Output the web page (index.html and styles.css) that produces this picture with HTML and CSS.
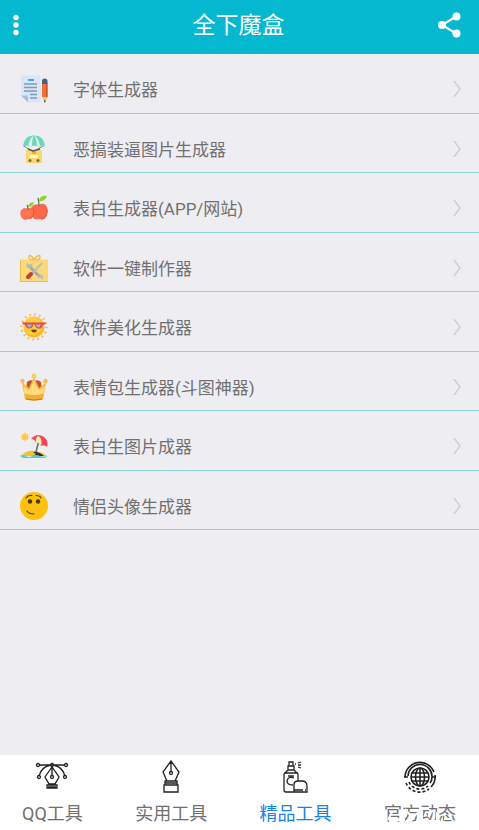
FILE: index.html
```html
<!DOCTYPE html>
<html lang="zh-CN">
<head>
  <meta charset="UTF-8" />
  <meta name="viewport" content="width=device-width, initial-scale=1" />
  <title>全下魔盒</title>
  <link rel="stylesheet" href="styles.css">
</head>
<body>

  <header class="topbar">
    <button type="button" class="icon-button" aria-label="菜单">
      <svg width="8" height="24" viewBox="0 0 8 24" fill="#fff"><circle cx="4" cy="4.500" r="2.700"/><circle cx="4" cy="12" r="2.700"/><circle cx="4" cy="19.500" r="2.700"/></svg>
    </button>
    <h1>全下魔盒</h1>
    <button type="button" class="icon-button" aria-label="分享">
      <svg width="24" height="26" viewBox="0 0 24 26" fill="#fff"><path d="M20 4 5 13l15 9" fill="none" stroke="#fff" stroke-width="2.200"/><circle cx="19.500" cy="4.500" r="4"/><circle cx="5" cy="13" r="4"/><circle cx="19.500" cy="21.500" r="4"/></svg>
    </button>
  </header>

  <main>
    <ul class="tool-list">
      <li><a href="#">
        <svg class="tool-icon" viewBox="0 0 28 28">
          <path d="M1 .5h19.500v27H8l-7-7z" fill="#d9e6f8"/><path d="M1 20.500h7v7z" fill="#a9bddb"/>
          <path d="M8 5h6" stroke="#42a5ef" stroke-width="2"/>
          <path d="M4 9h13M4 12.500h13M4 16h13M10 19.500h7M10 23h7" stroke="#8297b4" stroke-width="1.500"/>
          <path d="M22 8h5.500v14H22z" fill="#ee7138"/><path d="M26 8h1.500v14H26z" fill="#ce5427"/>
          <path d="M22 9V6q0-2.500 2.700-2.500T27.500 6v3z" fill="#49617f"/><path d="M22 22h5.500l-2.700 6z" fill="#f5c587"/><path d="m23.800 25.500 1 2.500 1-2.500z" fill="#333"/>
        </svg>
        <span>字体生成器</span>
        <svg class="chevron" viewBox="0 0 8 18"><path d="m1 1 6 8-6 8"/></svg>
      </a></li>
      <li><a href="#">
        <svg class="tool-icon" viewBox="0 0 28 28">
          <path d="m4 11 9 6 10-6" fill="none" stroke="#7b8180"/>
          <path d="M3 12Q4 .5 14 .5T25 12q-3-3-6 0-4-3-9 0-4-3-7 0z" fill="#69d6bd"/><path d="M8.500 11Q9 3 14 .5 19 3 20 11l-1 1q-4-3-9 0z" fill="#d8f4e9"/><path d="M12 11Q12 3 14 .5 16.500 3 17 11q-2.500-1-5 0z" fill="#69d6bd"/>
          <path d="M6 15h16v13H6z" fill="#fbd86f"/><path d="M12 15h4v4h-4z" fill="#e9b72b"/><path d="M10 20h8v3h-8z" fill="#fff3cd"/>
          <path d="m8 14 5 2 7-2" fill="none" stroke="#555" stroke-width="1.500"/><circle cx="10" cy="25.500" r="1.500" fill="#77683e"/><circle cx="18" cy="25.500" r="1.500" fill="#77683e"/>
        </svg>
        <span>恶搞装逼图片生成器</span>
        <svg class="chevron" viewBox="0 0 8 18"><path d="m1 1 6 8-6 8"/></svg>
      </a></li>
      <li><a href="#">
        <svg class="tool-icon" viewBox="0 0 28 28">
          <path d="M19 11c4-3 9 0 8.500 6-.5 5-4 9-6 8.500l-3-.5c-5 2-8-4-8-9 1-5 5-7 8.500-5z" fill="#fa694b"/><path d="M25 11c4 5 1 13-4 14.500 5 1 7-6 6.500-10z" fill="#e5473a"/>
          <path d="M7.500 15c4-3 7 0 6.500 4s-3 6.500-5 6l-2 .5C2 27-.5 21 .5 17.500 2 14 5 13 7.500 15z" fill="#ff7554"/><path d="M12 14c3 4 1 9-3 11 4 0 6-6 5-9z" fill="#e5473a"/>
          <path d="M19 12q0-5-1-8M8 16q0-4-1-5" fill="none" stroke="#397447" stroke-width="1.200"/><path d="M19 7q1-6 8-5-2 6-8 5zM8 13q1-5 6-5-1 5-6 5z" fill="#94ce37"/>
        </svg>
        <span>表白生成器(APP/网站)</span>
        <svg class="chevron" viewBox="0 0 8 18"><path d="m1 1 6 8-6 8"/></svg>
      </a></li>
      <li><a href="#">
        <svg class="tool-icon" viewBox="0 0 28 28">
          <path d="M0 5.500h28V28H0z" fill="#fbd979"/><path d="M0 27h28v1H0zM0 6h1v21H0z" fill="#e8be52"/>
          <path d="M14 5Q9-1 9 3t5 2zm0 0q6-6 6-2t-6 2z" fill="none" stroke="#f0c044" stroke-width="1.500"/>
          <path d="m9 12 11 11" stroke="#9eabb1" stroke-width="3"/><path d="M7 9q-2 5 2 5 5 0 3-5l-2 2zM18 25q1-5 4-4 2 2 0 5l-2-3z" fill="#b1bbc0"/>
          <path d="m22 9-11 12" stroke="#b4bec3" stroke-width="2"/><path d="m11 20-3 3" stroke="#c83c2c" stroke-width="4" stroke-linecap="round"/>
        </svg>
        <span>软件一键制作器</span>
        <svg class="chevron" viewBox="0 0 8 18"><path d="m1 1 6 8-6 8"/></svg>
      </a></li>
      <li><a href="#">
        <svg class="tool-icon" viewBox="0 0 28 28">
          <circle cx="14" cy="14" r="12.500" fill="none" stroke="#f3b43b" stroke-width="2.500" stroke-dasharray="1.300 3.609"/>
          <circle cx="14" cy="14" r="10.500" fill="#ffb927"/><circle cx="13" cy="13" r="9" fill="#ffcd37"/>
          <path d="M2 9.500h24l-1 2h-2q-1 5-5 4-3-1-3-4h-2q0 4-4 4-3 0-4-4H3z" fill="#ed4357"/><path d="M7 11.500h5q-1 3-3 3-2-1-2-3zM16 11.500h5q-1 3-3 3-2-1-2-3z" fill="#7ac6e5"/><path d="M11 17q3-1 6 0-1 3-3 2.500-2 0-3-2.500z" fill="#743c20"/>
        </svg>
        <span>软件美化生成器</span>
        <svg class="chevron" viewBox="0 0 8 18"><path d="m1 1 6 8-6 8"/></svg>
      </a></li>
      <li><a href="#">
        <svg class="tool-icon" viewBox="0 0 28 28">
          <path d="M7 9q3-3 7-1 4-2 7 1l1 8H6z" fill="#c4552f"/>
          <path d="M1.500 8q4 5 7.500 7l5-11 5 11q4-2 7.500-7L23 26q-9 3-18 0z" fill="#f6bd4b"/>
          <path d="M3.500 13q3 4 6 4l4.500-9 4.500 9q3 0 6-4l-1 8q-9.500 3-19 0z" fill="#ffdc7d"/><path d="M4.500 20.500q9.500 3 19 0l-1 6q-8 2-17 0z" fill="#f2ae37"/><path d="M6 26q8 2 16 0" fill="none" stroke="#c97721"/>
          <circle cx="14" cy="3" r="2.500" fill="#f6ce68"/><circle cx="2.500" cy="8" r="2.200" fill="#f2bd59"/><circle cx="25.500" cy="8" r="2.200" fill="#f2bd59"/>
        </svg>
        <span>表情包生成器(斗图神器)</span>
        <svg class="chevron" viewBox="0 0 8 18"><path d="m1 1 6 8-6 8"/></svg>
      </a></li>
      <li><a href="#">
        <svg class="tool-icon" viewBox="0 0 28 28">
          <path d="M5 .5v9M.5 5h9M2 2l6 6M8 2 2 8" stroke="#f7c352"/><circle cx="5" cy="5" r="3" fill="#ffc843"/>
          <path d="M1 24q5-6 14-5 7 1 12 5z" fill="#f4c12f"/><path d="M13 20q5-1 11 4H13l3-2z" fill="#273238"/>
          <path d="m19 8-3 12" stroke="#58707b" stroke-width="1.500"/>
          <path d="M11 7Q17 0 24 5q5 4 3 10-3-3-6-1-2-4-5-3-1-4-5-4z" fill="#ed4860"/><path d="M18 3.500q5 4 3 10.500-2-4-5-3-1-4 2-7.500z" fill="#f8e9ae"/>
          <path d="M0 24q3-2 6 0 3 2 6 0 4-2 8 0 4 1 8 0l-3 2H3z" fill="#65c8c3"/>
        </svg>
        <span>表白生图片成器</span>
        <svg class="chevron" viewBox="0 0 8 18"><path d="m1 1 6 8-6 8"/></svg>
      </a></li>
      <li><a href="#">
        <svg class="tool-icon" viewBox="0 0 28 28">
          <circle cx="14" cy="14" r="14" fill="#ffc10e"/><circle cx="10" cy="9.500" r="2.200" fill="#443921"/><circle cx="18" cy="9.500" r="2.200" fill="#443921"/>
          <path d="M6 6q2-3 6-2.500M16 3.500q4 0 5 2.500M7 19q2 3 7 3" fill="none" stroke="#56451b" stroke-width="1.200" stroke-linecap="round"/>
        </svg>
        <span>情侣头像生成器</span>
        <svg class="chevron" viewBox="0 0 8 18"><path d="m1 1 6 8-6 8"/></svg>
      </a></li>
    </ul>
  </main>

  <nav class="tabbar">
    <a href="#">
      <svg class="tab-icon" viewBox="0 0 34 34">
        <path d="M4 5h26M16 5Q6 7 4 16M18 5q10 2 12 11M17 7l-7 10 4 7h6l4-7zM17 7v8M12 25h10v3H12zM13 27h8"/>
        <circle cx="3" cy="5" r="1.500"/><circle cx="31" cy="5" r="1.500"/><circle cx="17" cy="5" r="1.500"/><circle cx="4" cy="17" r="1.500"/><circle cx="30" cy="17" r="1.500"/><circle cx="17" cy="17" r="1.500"/>
      </svg>
      <span>QQ工具</span>
    </a>
    <a href="#">
      <svg class="tab-icon" viewBox="0 0 34 34">
        <path d="m17 1-8 11 4 9h8l4-9zM17 1v10M11 21h12v4H11zM10 25h14v7H10zM11 23h12"/><circle cx="17" cy="13" r="1.500"/>
      </svg>
      <span>实用工具</span>
    </a>
    <a href="#" class="active" aria-current="page">
      <svg class="tab-icon" viewBox="0 0 34 34">
        <path d="M15 32H7q-2 0-2-2V14l4-4h6l4 4v7M5 13h14M9 10V6h6v4M10 6V2h4v4M9 16h6M16 4h1M19 3l3-1M19 5h3M19 7l3 1M15 18q-6-2-7 3 0 4 6 4M15 32v-7q0-4 4-4h4q5 0 5 5v6zM15 30h9M26 30h1"/>
      </svg>
      <span>精品工具</span>
    </a>
    <a href="#">
      <svg class="tab-icon globe" viewBox="0 0 34 34">
        <circle cx="17" cy="17" r="9"/><ellipse cx="17" cy="17" rx="4.500" ry="9"/><path d="M17 8v18M8 17h18M9 13h16M9 21h16M2 17a15 15 0 0 1 29-5M32 15a15 15 0 0 1-4 12M5 16a12 12 0 0 1 24 1q0 4-2 6M1 17h4M29 17h4"/><path d="M3 23a15 15 0 0 0 23 6M6 22a12 12 0 0 0 19 4" stroke-dasharray="3 2"/>
      </svg>
      <span>官方动态</span>
      <svg class="glints" viewBox="0 0 72 34"><path d="M2 18v12M8 20l-4 8M12 27h7M21 17l5 6M27 29l6-8M38 17v10M44 25l5-7M53 20v10M60 27h8M5 28h16M42 29h14M12 1h6M34 2h8M54 3l6 3"/></svg>
    </a>
  </nav>

</body>
</html>
```
FILE: styles.css
```css
* {
  box-sizing: border-box;
}
body {
  margin: 0;
  min-height: 100vh;
  display: flex;
  flex-direction: column;
  background: #eeedf2;
  color: #707070;
  font-family: Roboto, "Noto Sans CJK SC", sans-serif;
}
a {
  color: inherit;
  text-decoration: none;
}
.topbar {
  display: grid;
  grid-template-columns: 1fr auto 1fr;
  align-items: center;
  height: 54px;
  padding: 0 18px 4px 16px;
  background: #04b8cf;
  color: #fff;
}
.topbar h1 {
  margin: 0;
  padding-top: 2px;
  font-size: 23px;
  font-weight: 400;
  line-height: 36px;
}
.icon-button {
  padding: 0;
  border: 0;
  background: none;
}
.icon-button:last-child {
  justify-self: end;
}
.icon-button:first-child {
  justify-self: start;
  margin-left: -4px;
}
.icon-button svg {
  display: block;
}
main {
  flex: 1;
}
.tool-list {
  display: grid;
  grid-auto-rows: 1fr;
  height: 476px;
  margin: 0;
  padding: 0;
  list-style: none;
}
.tool-list li {
  border-bottom: 1px solid #8dd4da;
}
.tool-list a {
  display: flex;
  align-items: center;
  height: 100%;
  padding: 12px 18px 0 20px;
  font-size: 17px;
  line-height: 24px;
}
.tool-list span {
  flex: 1;
  margin-left: 25px;
  padding-top: 2px;
}
.tool-icon {
  width: 28px;
  height: 28px;
}
.chevron {
  width: 8px;
  height: 18px;
  fill: none;
  stroke: #cfced3;
  stroke-width: 1.5;
}
.tabbar {
  display: flex;
  justify-content: space-between;
  height: 75px;
  padding: 5px 23px 0 22px;
  background: #fff;
}
.tabbar a {
  position: relative;
  display: flex;
  flex-direction: column;
  align-items: center;
  gap: 7px;
  font-size: 18px;
  line-height: 26px;
}
.tabbar .active {
  color: #1683e9;
}
.tab-icon {
  width: 34px;
  height: 34px;
  fill: none;
  stroke: #222;
  stroke-width: 1.3;
}
.globe {
  stroke-width: 1.6;
}
/* white strokes over the last tab */
.glints {
  position: absolute;
  right: 0;
  bottom: 4px;
  left: 0;
  height: 34px;
  fill: none;
  stroke: #fff;
  stroke-width: 2;
}
```
